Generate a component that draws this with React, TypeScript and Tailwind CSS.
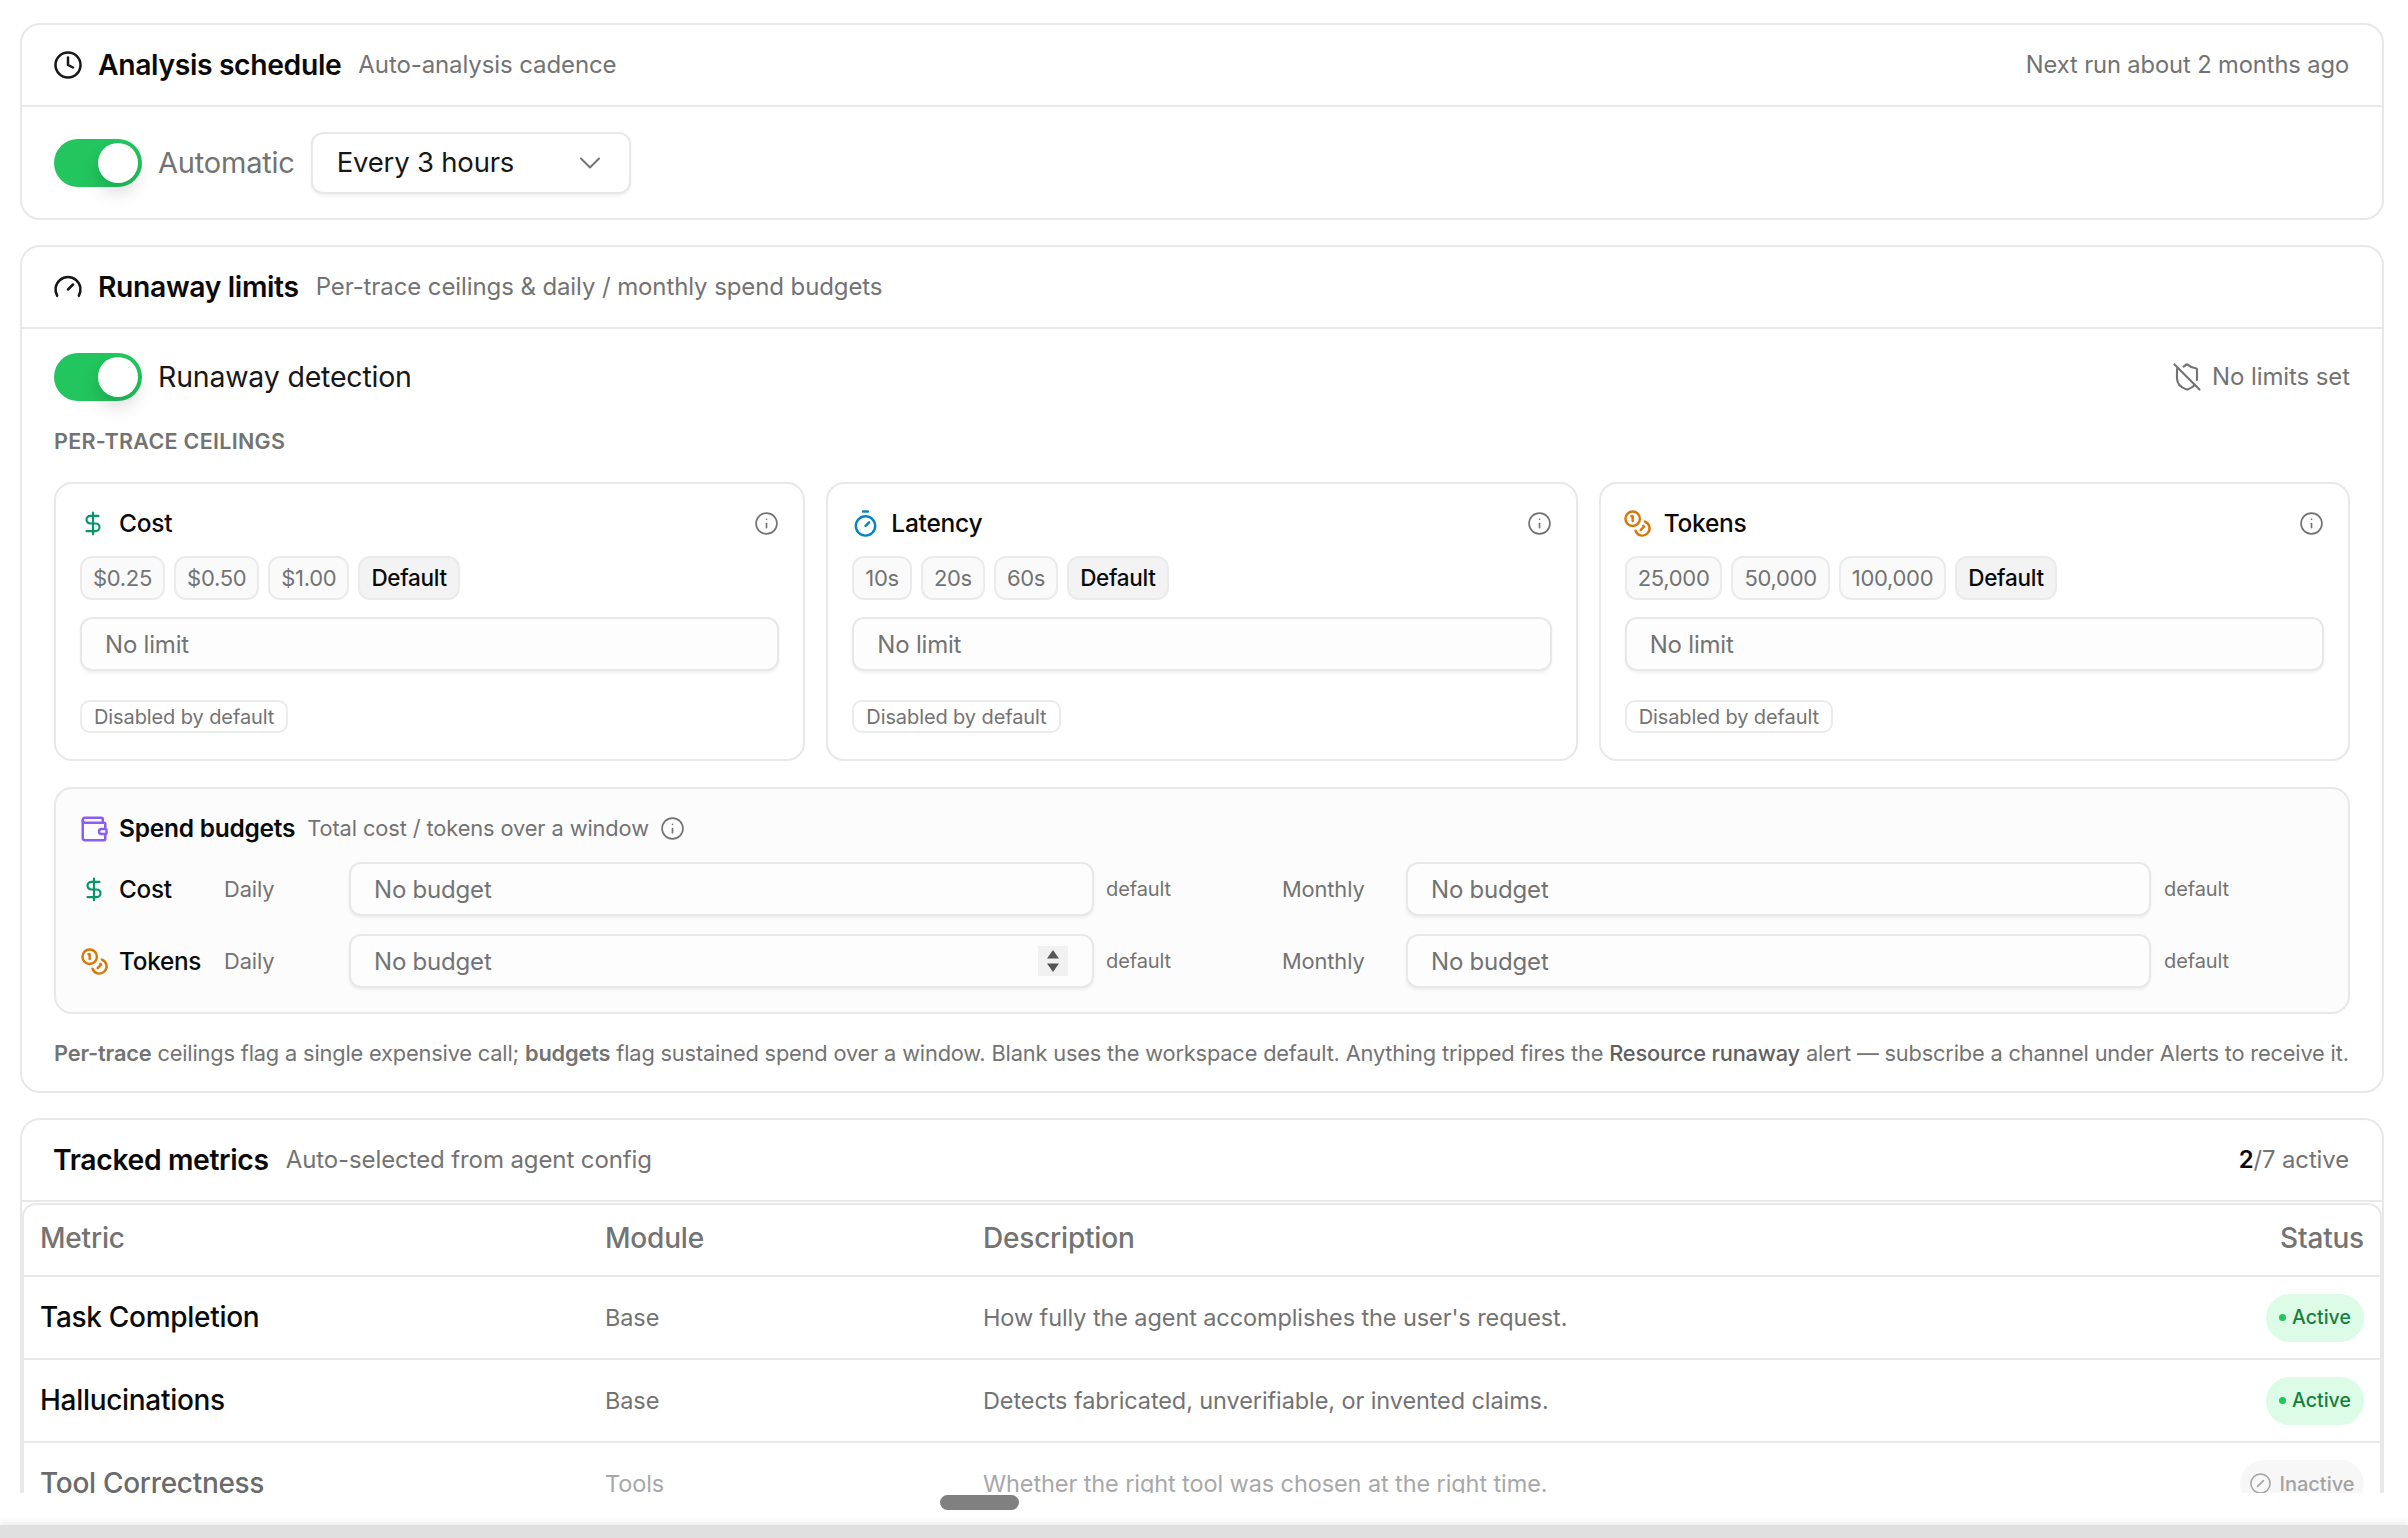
import React from "react";
import { Clock, Gauge, ShieldOff, DollarSign, Timer, Coins, Wallet, Info, ChevronDown, CircleSlash } from "lucide-react";

function Toggle() {
  return (
    <div className="flex h-[48px] w-[88px] shrink-0 items-center justify-end rounded-full bg-[#22c55e] pr-[4px]">
      <div className="h-[40px] w-[40px] rounded-full bg-white shadow-[0_10px_18px_rgba(0,0,0,0.14)]" />
    </div>
  );
}

function CardHeader({ icon, title, sub, right }: { icon?: React.ReactNode; title: string; sub: string; right?: React.ReactNode }) {
  return (
    <div className={`flex h-[82px] items-center justify-between border-b-2 border-[#e8e8e8] pr-[33px] ${icon ? "pl-[33px]" : "pl-[31px]"}`}>
      <div className="flex items-center">
        {icon && <span className="mr-[17px] flex w-[26px] justify-center text-[#171717]">{icon}</span>}
        <span className="text-[28.300px] font-semibold tracking-[-0.35px] text-[#0a0a0a]">{title}</span>
        <span className="ml-[17px] text-[24px] tracking-[-0.1px] text-[#737373]">{sub}</span>
      </div>
      {right}
    </div>
  );
}

function Chip({ label, active }: { label: string; active?: boolean }) {
  return (
    <div className={`flex h-[44px] items-center rounded-[12px] border-2 border-[#ebebeb] px-[11px] tracking-[-0.3px] ${active ? "bg-[#f3f3f3] text-[22.500px] font-medium text-[#0a0a0a]" : "bg-[#fafafa] text-[22px] text-[#737373]"}`}>
      {label}
    </div>
  );
}

function Field({ label, stepper }: { label: string; stepper?: boolean }) {
  return (
    <div className="flex h-[54px] w-full items-center justify-between rounded-[12px] border-2 border-[#e8e8e8] bg-[#fdfdfd] pl-[23px] pr-[24px] text-[24px] tracking-[-0.2px] text-[#737373] shadow-[0_2px_3px_rgba(0,0,0,0.06)]">
      <span className="pt-[2px]">{label}</span>
      {stepper && (
        <span className="flex h-[30px] w-[30px] items-center justify-center bg-[#f1f1f1]">
          <svg width="14" height="26" viewBox="0 0 14 26" fill="#555">
            <path d="M7 2 13 10.500H1Z" />
            <path d="M7 24 1 15.500H13Z" />
          </svg>
        </span>
      )}
    </div>
  );
}

function LimitCard({ icon, title, chips }: { icon: React.ReactNode; title: string; chips: string[] }) {
  return (
    <div className="h-[279px] rounded-[18px] border-2 border-[#e8e8e8] bg-white px-[24px] pt-[23px]">
      <div className="flex h-[33px] items-center justify-between">
        <div className="flex items-center">
          <span className="mr-[13px] flex w-[26px] justify-center">{icon}</span>
          <span className="text-[24.500px] font-medium tracking-[-0.25px] text-[#0a0a0a]">{title}</span>
        </div>
        <Info size={25} strokeWidth={1.6} className="text-[#737373]" />
      </div>
      <div className="mt-[16px] flex gap-[9px]">
        {chips.map((c) => (
          <Chip key={c} label={c} />
        ))}
        <Chip label="Default" active />
      </div>
      <div className="mt-[17px]">
        <Field label="No limit" />
      </div>
      <div className="mt-[29px] inline-flex h-[33px] items-center rounded-[10px] border-2 border-[#ebebeb] px-[12px] text-[20px] tracking-[-0.1px] text-[#737373]">
        Disabled by default
      </div>
    </div>
  );
}

function BudgetRow({ icon, label, stepper }: { icon: React.ReactNode; label: string; stepper?: boolean }) {
  return (
    <div className="flex h-[54px] items-center">
      <span className="mr-[12px] flex w-[26px] justify-center">{icon}</span>
      <span className="w-[105px] text-[24.300px] font-medium tracking-[-0.25px] text-[#0a0a0a]">{label}</span>
      <span className="w-[125px] text-[21.800px] tracking-[-0.1px] text-[#737373]">Daily</span>
      <div className="w-[745px]">
        <Field label="No budget" stepper={stepper} />
      </div>
      <span className="ml-[12px] w-[176px] text-[20px] tracking-[-0.1px] text-[#737373]">default</span>
      <span className="w-[124px] text-[21.800px] tracking-[-0.1px] text-[#737373]">Monthly</span>
      <div className="w-[745px]">
        <Field label="No budget" />
      </div>
      <span className="ml-[13px] text-[20px] tracking-[-0.1px] text-[#737373]">default</span>
    </div>
  );
}

function Row({ name, module, desc, active }: { name: string; module: string; desc: string; active: boolean }) {
  return (
    <div className="flex h-[83px] shrink-0 items-center justify-between border-b-2 border-[#e8e8e8] pl-[16px] pr-[16px]">
      <div className="flex items-center">
        <span className={`w-[565px] pb-[2px] text-[28px] font-medium tracking-[-0.3px] ${active ? "text-[#0a0a0a]" : "text-[#6b6b6b]"}`}>{name}</span>
        <span className={`w-[378px] text-[23.500px] tracking-[-0.1px] ${active ? "text-[#737373]" : "text-[#a8a8a8]"}`}>{module}</span>
        <span className={`text-[23.500px] tracking-[-0.1px] ${active ? "text-[#737373]" : "text-[#a8a8a8]"}`}>{desc}</span>
      </div>
      {active ? (
        <span className="flex h-[48px] w-[98px] items-center justify-center gap-[6px] rounded-full bg-[#dcfce7] text-[19.500px] font-medium text-[#15803d]">
          <span className="h-[7px] w-[7px] rounded-full bg-[#22c55e]" />
          Active
        </span>
      ) : (
        <span className="flex h-[48px] w-[124px] items-center justify-center gap-[7px] rounded-full bg-[#f7f7f7] text-[20px] font-medium text-[#a3a3a3]">
          <CircleSlash size={23} strokeWidth={1.6} />
          Inactive
        </span>
      )}
    </div>
  );
}

export default function App() {
  const cost = <DollarSign size={29} strokeWidth={2} className="text-[#059669]" />;
  const tokens = <Coins size={29} strokeWidth={2} className="shrink-0 text-[#d97706]" />;
  return (
    <div className="flex h-[1538px] w-full flex-col overflow-hidden bg-white font-['Inter',sans-serif]">
      <div className="h-[1493px] shrink-0 overflow-hidden pl-[20px] pr-[24px] pt-[23px]">
        <div className="flex flex-col gap-[25px]">
          <section className="h-[197px] rounded-[20px] border-2 border-[#e8e8e8] bg-white">
            <CardHeader
              icon={<Clock size={30} strokeWidth={2} className="shrink-0" />}
              title="Analysis schedule"
              sub="Auto-analysis cadence"
              right={<span className="text-[23.700px] tracking-[-0.1px] text-[#737373]">Next run about 2 months ago</span>}
            />
            <div className="flex h-[112px] items-center gap-[16px] pl-[32px]">
              <Toggle />
              <span className="text-[29px] tracking-[-0.2px] text-[#737373]">Automatic</span>
              <div className="flex h-[62px] w-[320px] items-center justify-between rounded-[12px] border-2 border-[#e8e8e8] bg-white pl-[24px] pr-[21px] text-[27.500px] tracking-[-0.2px] text-[#171717] shadow-[0_2px_3px_rgba(0,0,0,0.06)]">
                <span>Every 3 hours</span>
                <ChevronDown size={36} strokeWidth={1.3} className="text-[#737373]" />
              </div>
            </div>
          </section>

          <section className="h-[848px] rounded-[20px] border-2 border-[#e8e8e8] bg-white">
            <CardHeader icon={<Gauge size={30} strokeWidth={2} className="shrink-0" />} title="Runaway limits" sub="Per-trace ceilings & daily / monthly spend budgets" />
            <div className="px-[32px]">
              <div className="mt-[24px] flex h-[48px] items-center justify-between">
                <div className="flex items-center gap-[16px]">
                  <Toggle />
                  <span className="text-[28.500px] tracking-[-0.2px] text-[#171717]">Runaway detection</span>
                </div>
                <div className="flex items-center gap-[10px] text-[24px] tracking-[-0.1px] text-[#737373]">
                  <ShieldOff size={30} strokeWidth={1.7} />
                  No limits set
                </div>
              </div>
              <div className="mt-[25px] text-[21.500px] leading-[30px] font-semibold tracking-[0.3px] uppercase text-[#737373]">Per-trace ceilings</div>
              <div className="mt-[26px] grid grid-cols-3 gap-[21px]">
                <LimitCard icon={cost} title="Cost" chips={["$0.25", "$0.50", "$1.00"]} />
                <LimitCard icon={<Timer size={29} strokeWidth={2} className="shrink-0 text-[#0284c7]" />} title="Latency" chips={["10s", "20s", "60s"]} />
                <LimitCard icon={tokens} title="Tokens" chips={["25,000", "50,000", "100,000"]} />
              </div>
              <div className="mt-[26px] h-[227px] rounded-[18px] border-2 border-[#e8e8e8] bg-[#fcfcfc] px-[25px] pt-[23px]">
                <div className="flex h-[33px] items-center">
                  <span className="mr-[12px] flex w-[26px] justify-center">
                    <Wallet size={30} strokeWidth={2} className="shrink-0 text-[#8b5cf6]" />
                  </span>
                  <span className="text-[24.500px] font-semibold tracking-[-0.25px] text-[#0a0a0a]">Spend budgets</span>
                  <span className="ml-[12px] text-[21.800px] tracking-[-0.1px] text-[#737373]">Total cost / tokens over a window</span>
                  <Info size={25} strokeWidth={1.6} className="ml-[11px] text-[#737373]" />
                </div>
                <div className="mt-[17px] flex flex-col gap-[18px]">
                  <BudgetRow icon={cost} label="Cost" />
                  <BudgetRow icon={tokens} label="Tokens" stepper />
                </div>
              </div>
              <p className="mt-[24px] whitespace-nowrap text-[21.800px] leading-[30px] tracking-[-0.17px] text-[#737373]">
                <b className="font-semibold">Per-trace</b> ceilings flag a single expensive call; <b className="font-semibold">budgets</b> flag sustained spend over a window. Blank uses the workspace default. Anything tripped fires the <span className="font-medium text-[#5f5f5f]">Resource runaway</span> alert — subscribe a channel under Alerts to receive it.
              </p>
            </div>
          </section>

          <section className="h-[500px] rounded-t-[20px] border-x-2 border-t-2 border-[#e8e8e8] bg-white">
            <CardHeader
              title="Tracked metrics"
              sub="Auto-selected from agent config"
              right={
                <span className="text-[23.900px] tracking-[-0.1px] text-[#737373]">
                  <b className="font-semibold text-[#0a0a0a]">2</b>/7 active
                </span>
              }
            />
            <div className="mt-[1px] rounded-t-[14px] border-x-2 border-t-2 border-[#e8e8e8]">
              <div className="flex h-[72px] items-center justify-between border-b-2 border-[#e8e8e8] pb-[5px] pl-[16px] pr-[16px] text-[28px] font-medium tracking-[-0.2px] text-[#737373]">
                <div className="flex items-center">
                  <span className="w-[565px]">Metric</span>
                  <span className="w-[378px]">Module</span>
                  <span>Description</span>
                </div>
                <span>Status</span>
              </div>
              <Row name="Task Completion" module="Base" desc="How fully the agent accomplishes the user's request." active />
              <Row name="Hallucinations" module="Base" desc="Detects fabricated, unverifiable, or invented claims." active />
              <Row name="Tool Correctness" module="Tools" desc="Whether the right tool was chosen at the right time." active={false} />
            </div>
          </section>
        </div>
      </div>
      <div className="h-[32px] shrink-0 bg-white pl-[940px] pt-[2px]">
        <div className="h-[15px] w-[79px] rounded-full bg-[#808080]" />
      </div>
      <div className="h-[13px] shrink-0 bg-[#e0e0e0] shadow-[0_-3px_6px_rgba(0,0,0,0.08)]" />
    </div>
  );
}
